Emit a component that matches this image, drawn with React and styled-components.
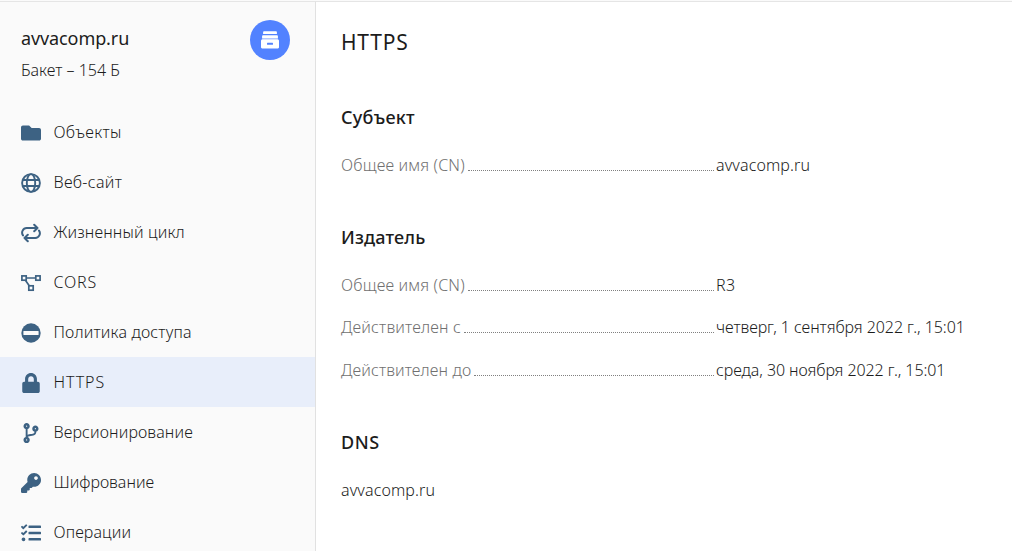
import React from 'react';
import styled, { createGlobalStyle } from 'styled-components';
import { FaFolder, FaLock, FaCodeBranch, FaKey, FaTasks } from 'react-icons/fa';

const GlobalStyle = createGlobalStyle`
  * { box-sizing: border-box; }
  body {
    margin: 0;
    background: #fff;
    color: #1c1c1c;
    font-family: "Noto Sans", "Open Sans", sans-serif;
    font-weight: 300;
    font-size: 16px;
    overflow: hidden;
  }
`;

const Page = styled.div`
  display: flex;
  height: 551px;
  padding-top: 1px;
  background: #fafafa;
`;

const Sidebar = styled.aside`
  width: 316px;
  flex: none;
  border-top: 1px solid #e5e5e5;
  border-right: 1px solid #e1e1e1;
  background: #fafafa;
  overflow: hidden;
`;

const BucketHeader = styled.header`
  display: flex;
  justify-content: space-between;
  height: 105px;
  padding: 18px 25px 0 21px;
`;

const BucketName = styled.div`
  font-size: 18px;
  font-weight: 400;
  line-height: 36px;
  letter-spacing: -0.1px;
`;

const BucketInfo = styled.div`
  line-height: 28px;
`;

const Badge = styled.div`
  display: flex;
  align-items: center;
  justify-content: center;
  width: 40px;
  height: 40px;
  border-radius: 50%;
  background: #5282ff;
`;

const NavItem = styled.a`
  display: flex;
  align-items: center;
  height: 50px;
  padding-left: 21px;
  background: ${(p) => (p.$active ? '#e8eefa' : 'transparent')};
`;

const IconBox = styled.span`
  display: flex;
  align-items: center;
  justify-content: center;
  width: 20px;
  height: 20px;
  margin: 2px 12.5px 0 0;
  color: #3d6283;
`;

const Label = styled.span`
  line-height: 22px;
  white-space: nowrap;
  letter-spacing: ${(p) => p.$spacing || 0}px;
`;

const Main = styled.main`
  flex: 1;
  border-top: 1px solid #e5e5e5;
  padding: 25px 0 0 25px;
  background: #fff;
`;

const Title = styled.h1`
  margin: 0;
  font-size: 21px;
  font-weight: 400;
  line-height: 30px;
  letter-spacing: 0.8px;
`;

const Section = styled.section`
  padding-top: ${(p) => p.$gap}px;
`;

const SectionTitle = styled.h2`
  margin: 0 0 23px;
  font-size: 18px;
  font-weight: 500;
  line-height: 26px;
  letter-spacing: ${(p) => p.$spacing || 0}px;
`;

const Field = styled.div`
  display: flex;
  height: 24px;
  margin-bottom: ${(p) => p.$gap || 0}px;
`;

const FieldText = styled(Label)`
  line-height: 24px;
`;

const FieldName = styled.div`
  display: flex;
  width: 375px;
  padding-right: 2px;
  color: #707070;
`;

const Leader = styled.span`
  flex: 1;
  height: 18px;
  margin-left: 3px;
  border-bottom: 1px dotted #808080;
`;

const GlobeIcon = () => (
  <svg width="20" height="20" viewBox="0 0 20 20" fill="none" stroke="currentColor" strokeWidth="1.9">
    <circle cx="10" cy="10" r="8.9" />
    <ellipse cx="10" cy="10" rx="4.2" ry="8.9" />
    <path d="M1.900 7h16.200M1.900 13h16.200" />
  </svg>
);

const CycleIcon = () => (
  <svg width="20" height="20" viewBox="0 0 20 20" fill="none" stroke="currentColor" strokeWidth="2" strokeLinecap="round" strokeLinejoin="round">
    <path d="M2 12.400A4.700 4.700 0 0 1 5.700 5H16.500M13.200 1.700l3.300 3.300l-3.300 3.300" />
    <path d="M18 7.600a4.700 4.700 0 0 1-3.700 7.400H3.500M6.800 11.700l-3.300 3.300l3.300 3.300" />
  </svg>
);

const NodesIcon = () => (
  <svg width="20" height="20" viewBox="0 0 20 20" fill="none" stroke="currentColor" strokeWidth="1.7">
    <rect x="0.9" y="2.9" width="4.3" height="4.3" />
    <rect x="14.8" y="2.9" width="4.3" height="4.3" />
    <rect x="7.8" y="12.8" width="4.4" height="4.4" />
    <path d="M5.5 5h9M4.6 7.4l3.8 5.5" />
  </svg>
);

const DenyIcon = () => (
  <svg width="20" height="20" viewBox="0 0 20 20">
    <circle cx="10" cy="10" r="9.7" fill="currentColor" />
    <rect x="2.4" y="7.9" width="15.2" height="4.2" rx="0.6" fill="#fafafa" />
  </svg>
);

const DrawerIcon = () => (
  <svg width="18" height="18" viewBox="0 0 18 18">
    <path d="M3 .3h12a.9.9 0 0 1 .9.9V3H2.1V1.2A.9.9 0 0 1 3 .3Z" fill="#fff" />
    <path d="M2 4.2h14a.9.9 0 0 1 .9.9V7H1.1V5.1A.9.9 0 0 1 2 4.2Z" fill="#fff" />
    <path d="M1.1 7h15.800v2H1.1Z" fill="#b4c8ff" />
    <rect x="0" y="8.6" width="18" height="8.8" rx="1.1" fill="#fff" />
    <rect x="6" y="11.7" width="6" height="2" rx="0.5" fill="#5282ff" />
  </svg>
);

const navItems = [
  { label: 'Объекты', icon: <FaFolder size={20} />, spacing: 0.3 },
  { label: 'Веб-сайт', icon: <GlobeIcon />, spacing: 0.3 },
  { label: 'Жизненный цикл', icon: <CycleIcon />, spacing: 0.15 },
  { label: 'CORS', icon: <NodesIcon />, spacing: 0.8 },
  { label: 'Политика доступа', icon: <DenyIcon />, spacing: 0.17 },
  { label: 'HTTPS', icon: <FaLock size={20} />, active: true, spacing: 0.9 },
  { label: 'Версионирование', icon: <FaCodeBranch size={20} />, spacing: 0.12 },
  { label: 'Шифрование', icon: <FaKey size={20} />, spacing: 0 },
  { label: 'Операции', icon: <FaTasks size={20} />, spacing: 0.12 },
];

const issuer = [
  { name: 'Общее имя (CN)', value: 'R3', gap: 18, nameSpacing: 0.17, valueSpacing: 0.4 },
  { name: 'Действителен с', value: 'четверг, 1 сентября 2022 г., 15:01', gap: 19, nameSpacing: 0.17, valueSpacing: -0.07 },
  { name: 'Действителен до', value: 'среда, 30 ноября 2022 г., 15:01', nameSpacing: 0.12, valueSpacing: -0.08 },
];

const InfoRow = ({ name, value, gap, nameSpacing, valueSpacing }) => (
  <Field $gap={gap}>
    <FieldName>
      <FieldText $spacing={nameSpacing}>{name}</FieldText>
      <Leader />
    </FieldName>
    <FieldText $spacing={valueSpacing}>{value}</FieldText>
  </Field>
);

export default function App() {
  return (
    <Page>
      <GlobalStyle />
      <Sidebar>
        <BucketHeader>
          <div>
            <BucketName>avvacomp.ru</BucketName>
            <BucketInfo>Бакет – 154 Б</BucketInfo>
          </div>
          <Badge><DrawerIcon /></Badge>
        </BucketHeader>
        <nav>
          {navItems.map((item) => (
            <NavItem key={item.label} $active={item.active}>
              <IconBox>{item.icon}</IconBox>
              <Label $spacing={item.spacing}>{item.label}</Label>
            </NavItem>
          ))}
        </nav>
      </Sidebar>
      <Main>
        <Title>HTTPS</Title>
        <Section $gap={47}>
          <SectionTitle $spacing={0.3}>Субъект</SectionTitle>
          <InfoRow name="Общее имя (CN)" value="avvacomp.ru" nameSpacing={0.17} valueSpacing={0.12} />
        </Section>
        <Section $gap={47}>
          <SectionTitle $spacing={0.15}>Издатель</SectionTitle>
          {issuer.map((row) => <InfoRow key={row.name} {...row} />)}
        </Section>
        <Section $gap={47}>
          <SectionTitle $spacing={0.6}>DNS</SectionTitle>
          <Field><FieldText $spacing={0.12}>avvacomp.ru</FieldText></Field>
        </Section>
      </Main>
    </Page>
  );
}
